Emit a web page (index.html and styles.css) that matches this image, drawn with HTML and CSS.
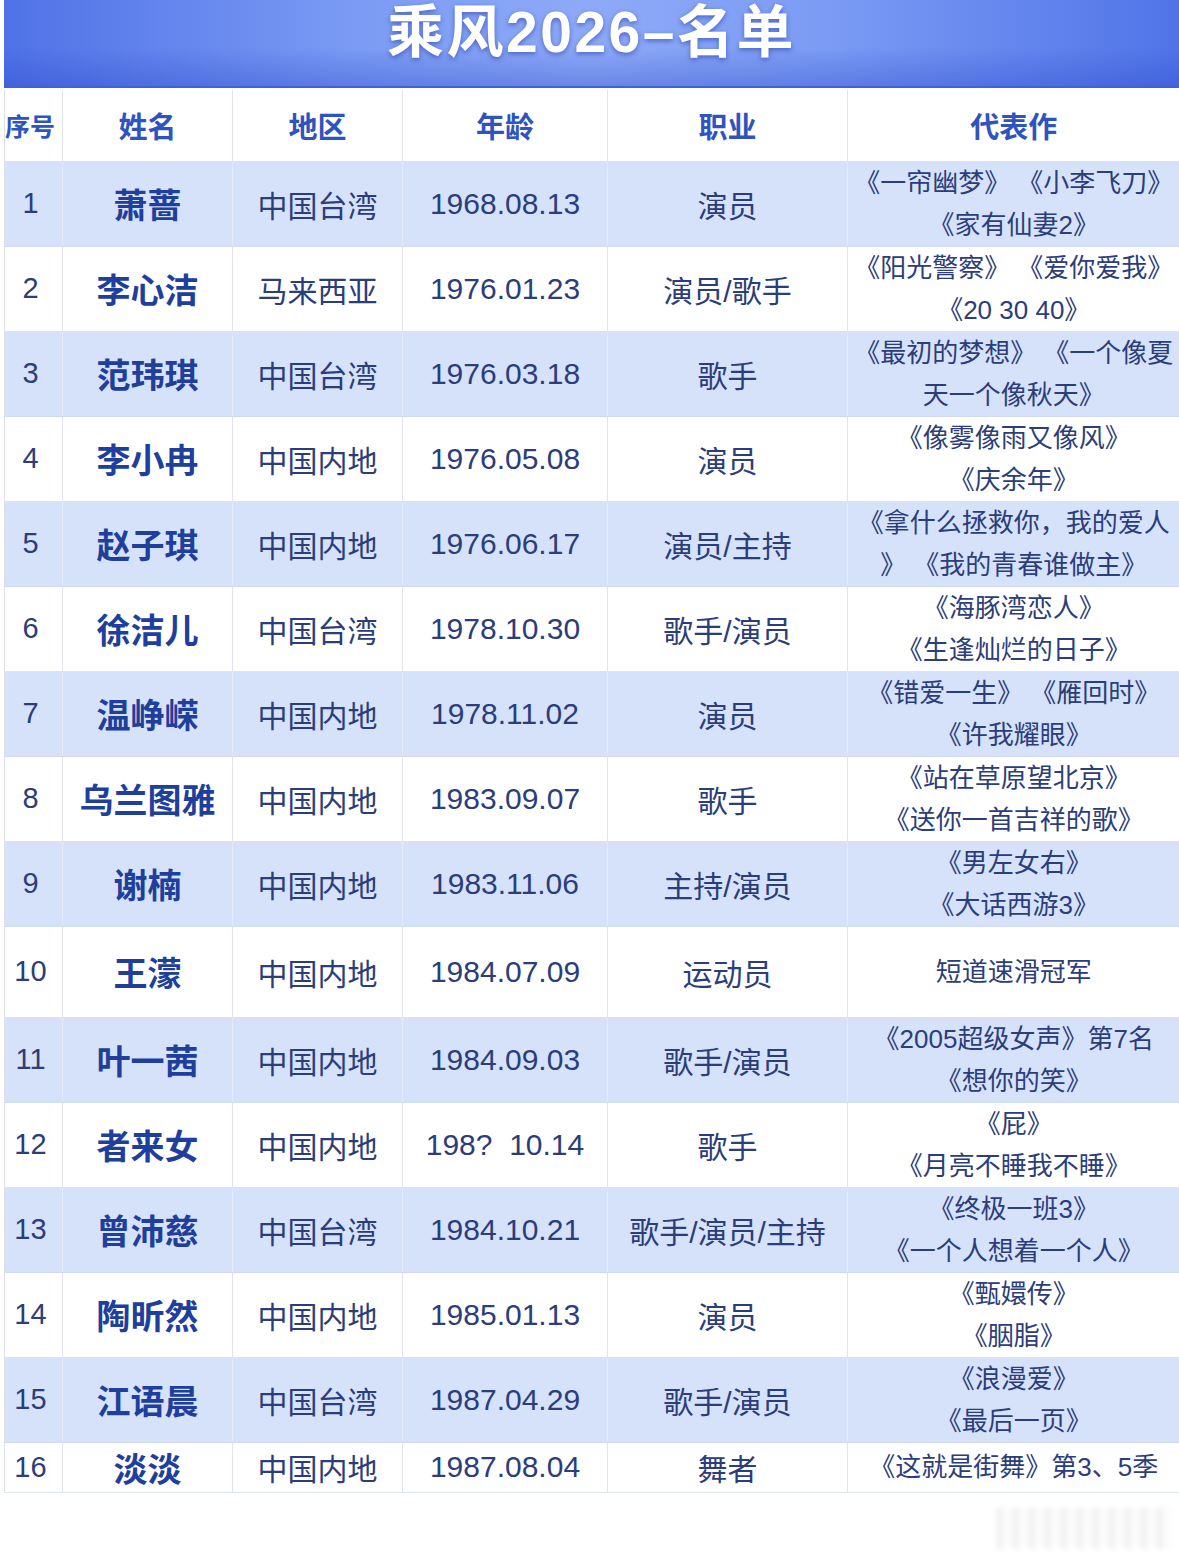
FILE: index.html
```html
<!DOCTYPE html>
<html lang="zh-CN">
<head>
<meta charset="utf-8">
<title>乘风2026-名单</title>
<link rel="stylesheet" href="styles.css">
</head>
<body>
<div class="page">
  <div class="banner"><h1 class="title">乘风2026–名单</h1></div>
  <table class="roster">
    <colgroup>
      <col class="c-no"><col class="c-name"><col class="c-region"><col class="c-date"><col class="c-job"><col class="c-works">
    </colgroup>
    <thead>
      <tr class="head">
        <th class="h-no">序号</th><th>姓名</th><th>地区</th><th>年龄</th><th>职业</th><th>代表作</th>
      </tr>
    </thead>
    <tbody>
      <tr class="odd"><td class="no">1</td><td class="name">萧蔷</td><td>中国台湾</td><td>1968.08.13</td><td>演员</td><td class="works"><span>《一帘幽梦》 《小李飞刀》</span><span>《家有仙妻2》</span></td></tr>
      <tr><td class="no">2</td><td class="name">李心洁</td><td>马来西亚</td><td>1976.01.23</td><td>演员/歌手</td><td class="works"><span>《阳光警察》 《爱你爱我》</span><span>《20 30 40》</span></td></tr>
      <tr class="odd"><td class="no">3</td><td class="name">范玮琪</td><td>中国台湾</td><td>1976.03.18</td><td>歌手</td><td class="works"><span>《最初的梦想》 《一个像夏</span><span>天一个像秋天》</span></td></tr>
      <tr><td class="no">4</td><td class="name">李小冉</td><td>中国内地</td><td>1976.05.08</td><td>演员</td><td class="works"><span>《像雾像雨又像风》</span><span>《庆余年》</span></td></tr>
      <tr class="odd"><td class="no">5</td><td class="name">赵子琪</td><td>中国内地</td><td>1976.06.17</td><td>演员/主持</td><td class="works"><span>《拿什么拯救你，我的爱人</span><span>》 《我的青春谁做主》</span></td></tr>
      <tr><td class="no">6</td><td class="name">徐洁儿</td><td>中国台湾</td><td>1978.10.30</td><td>歌手/演员</td><td class="works"><span>《海豚湾恋人》</span><span>《生逢灿烂的日子》</span></td></tr>
      <tr class="odd"><td class="no">7</td><td class="name">温峥嵘</td><td>中国内地</td><td>1978.11.02</td><td>演员</td><td class="works"><span>《错爱一生》 《雁回时》</span><span>《许我耀眼》</span></td></tr>
      <tr><td class="no">8</td><td class="name">乌兰图雅</td><td>中国内地</td><td>1983.09.07</td><td>歌手</td><td class="works"><span>《站在草原望北京》</span><span>《送你一首吉祥的歌》</span></td></tr>
      <tr class="odd"><td class="no">9</td><td class="name">谢楠</td><td>中国内地</td><td>1983.11.06</td><td>主持/演员</td><td class="works"><span>《男左女右》</span><span>《大话西游3》</span></td></tr>
      <tr class="tall"><td class="no">10</td><td class="name">王濛</td><td>中国内地</td><td>1984.07.09</td><td>运动员</td><td class="works"><span>短道速滑冠军</span></td></tr>
      <tr class="odd"><td class="no">11</td><td class="name">叶一茜</td><td>中国内地</td><td>1984.09.03</td><td>歌手/演员</td><td class="works"><span>《2005超级女声》第7名</span><span>《想你的笑》</span></td></tr>
      <tr><td class="no">12</td><td class="name">者来女</td><td>中国内地</td><td>198?&nbsp;&nbsp;10.14</td><td>歌手</td><td class="works"><span>《屁》</span><span>《月亮不睡我不睡》</span></td></tr>
      <tr class="odd"><td class="no">13</td><td class="name">曾沛慈</td><td>中国台湾</td><td>1984.10.21</td><td>歌手/演员/主持</td><td class="works"><span>《终极一班3》</span><span>《一个人想着一个人》</span></td></tr>
      <tr><td class="no">14</td><td class="name">陶昕然</td><td>中国内地</td><td>1985.01.13</td><td>演员</td><td class="works"><span>《甄嬛传》</span><span>《胭脂》</span></td></tr>
      <tr class="odd"><td class="no">15</td><td class="name">江语晨</td><td>中国台湾</td><td>1987.04.29</td><td>歌手/演员</td><td class="works"><span>《浪漫爱》</span><span>《最后一页》</span></td></tr>
      <tr class="short"><td class="no">16</td><td class="name">淡淡</td><td>中国内地</td><td>1987.08.04</td><td>舞者</td><td class="works"><span>《这就是街舞》第3、5季</span></td></tr>
    </tbody>
  </table>
  <div class="watermark"></div>
</div>
</body>
</html>
```

FILE: styles.css
```css
html, body {
  margin: 0;
  padding: 0;
  background: #ffffff;
}

.page {
  width: 1179px;
  height: 1557px;
  padding-left: 4px;
  box-sizing: border-box;
  display: flex;
  flex-direction: column;
  font-family: "Liberation Sans", "Noto Sans CJK SC", sans-serif;
  color: #2b3d7a;
  overflow: hidden;
}

.banner {
  height: 88px;
  box-sizing: border-box;
  background:
    linear-gradient(180deg, rgba(255,255,255,0) 0%, rgba(255,255,255,0) 55%, rgba(40,70,200,0.35) 100%),
    linear-gradient(90deg, #4f72e7 0%, #7b9bf4 30%, #8eaaf7 50%, #7b9bf4 70%, #5074e8 100%);
  border-bottom: 2px solid #3f62dc;
  display: flex;
  justify-content: center;
  align-items: flex-start;
}

.title {
  margin: 0;
  padding: 0;
  font-family: "Liberation Sans", "Noto Sans CJK SC", sans-serif;
  font-weight: 700;
  font-size: 57px;
  line-height: 64px;
  color: #ffffff;
  letter-spacing: 2.5px;
  text-shadow: 0 2px 5px rgba(30, 50, 160, 0.55);
}

.roster {
  border-collapse: collapse;
  table-layout: fixed;
  width: 1175px;
  margin-top: 2px;
  border-left: 1px solid #dbe0ea;
}

.c-no { width: 58px; }
.c-name { width: 170px; }
.c-region { width: 170px; }
.c-date { width: 205px; }
.c-job { width: 240px; }
.c-works { width: 332px; }

.roster th,
.roster td {
  padding: 0;
  text-align: center;
  vertical-align: middle;
  border-right: 1px solid #dfe4ee;
  border-bottom: 1px solid #dde3ef;
  white-space: nowrap;
  overflow: hidden;
}

.roster th:last-child,
.roster td:last-child {
  border-right: none;
}

.head {
  height: 71px;
}

.head th {
  font-family: "Noto Sans CJK SC", sans-serif;
  font-weight: 700;
  font-size: 29px;
  color: #2f53bf;
  background: #ffffff;
}

.head th.h-no {
  font-size: 25px;
  text-align: left;
}

.roster tbody tr {
  height: 85px;
  background: #ffffff;
}

.roster tbody tr.odd {
  background: #d6e2fa;
}

.roster tbody tr.odd td {
  border-right-color: #e4eafb;
  border-bottom-color: #cfdaf2;
}

.roster tbody tr.tall {
  height: 91px;
}

.roster tbody tr.short {
  height: 49px;
}

.roster td {
  font-size: 30px;
  color: #2b3d7a;
}

.roster td.no {
  font-size: 29px;
  padding-right: 6px;
}

.roster td.name {
  font-family: "Noto Sans CJK SC", sans-serif;
  font-weight: 700;
  font-size: 34px;
  color: #203f9c;
}

.roster td.works {
  font-size: 26px;
  line-height: 42px;
}

.works span {
  display: block;
}

.watermark {
  align-self: flex-end;
  width: 175px;
  height: 40px;
  margin-top: 16px;
  margin-right: 8px;
  background:
    repeating-linear-gradient(90deg, rgba(120,120,130,0.08) 0 7px, rgba(255,255,255,0) 7px 16px),
    repeating-linear-gradient(180deg, rgba(120,120,130,0.05) 0 3px, rgba(255,255,255,0) 3px 7px);
  filter: blur(2.5px);
}
```
